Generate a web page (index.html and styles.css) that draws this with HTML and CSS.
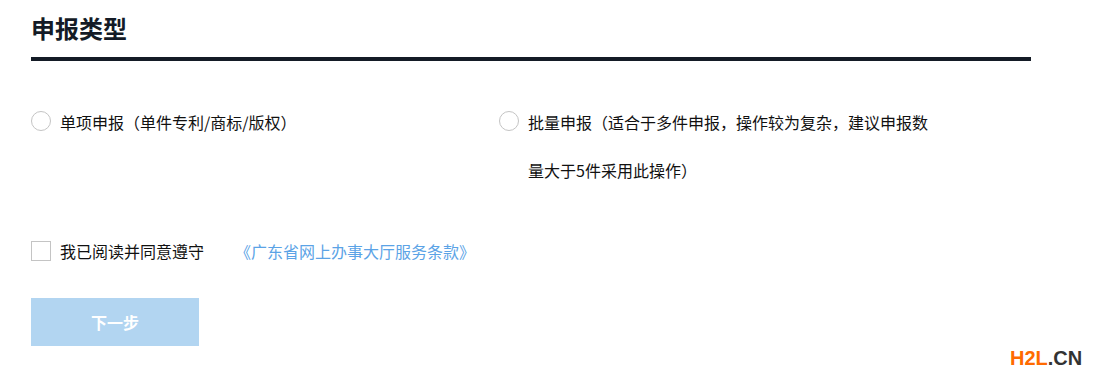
FILE: index.html
```html
<!DOCTYPE html>
<html lang="zh-CN">
<head>
<meta charset="utf-8">
<title>申报类型</title>
<link rel="stylesheet" href="styles.css">
</head>
<body>
<div class="page">
  <h1 class="title">申报类型</h1>
  <div class="options">
    <label class="option option-single">
      <span class="radio"></span>
      <span class="opt-text">单项申报（单件专利/商标/版权）</span>
    </label>
    <label class="option option-batch">
      <span class="radio"></span>
      <span class="opt-text opt-wrap">批量申报（适合于多件申报，操作较为复杂，建议申报数量大于5件采用此操作）</span>
    </label>
  </div>
  <div class="agree">
    <span class="checkbox"></span>
    <span class="agree-text">我已阅读并同意遵守</span>
    <a class="agree-link" href="#">《广东省网上办事大厅服务条款》</a>
  </div>
  <button class="next" type="button">下一步</button>
</div>
<div class="watermark"><span class="wm-a">H2L</span><span class="wm-b">.CN</span></div>
</body>
</html>
```
FILE: styles.css
```css
html, body {
  margin: 0;
  padding: 0;
  background: #ffffff;
}
body {
  font-family: "Noto Sans CJK SC", "Microsoft YaHei", sans-serif;
  color: #111111;
  width: 1096px;
  height: 381px;
  overflow: hidden;
  position: relative;
}
.page {
  padding-left: 31px;
  width: 1000px;
}
.title {
  margin: 0;
  padding: 10px 0 11px 0;
  font-size: 24px;
  line-height: 36px;
  font-weight: 700;
  color: #141b26;
  border-bottom: 4px solid #141b26;
}
.options {
  display: flex;
  margin-top: 37px;
}
.option {
  display: flex;
  align-items: flex-start;
  font-size: 16px;
  line-height: 48px;
  color: #111111;
}
.option-single {
  width: 468px;
}
.radio {
  flex: none;
  width: 18px;
  height: 18px;
  border: 1px solid #c4c4c4;
  border-radius: 50%;
  margin-top: 13px;
  margin-right: 9px;
  background: #fff;
}
.opt-wrap {
  width: 408px;
}
.agree {
  display: flex;
  align-items: center;
  margin-top: 33px;
  height: 48px;
  font-size: 16px;
}
.checkbox {
  width: 18px;
  height: 18px;
  border: 1px solid #c4c4c4;
  margin-right: 9px;
  background: #fff;
}
.agree-text {
  color: #111111;
}
.agree-link {
  margin-left: 31px;
  color: #5ba3e6;
  text-decoration: none;
}
.next {
  display: block;
  margin-top: 23px;
  width: 168px;
  height: 48px;
  border: none;
  background: #b2d5f1;
  color: #ffffff;
  font-family: "Noto Sans CJK SC", sans-serif;
  font-size: 16px;
  font-weight: 700;
  padding: 0;
}
.watermark {
  position: absolute;
  left: 1010px;
  top: 344px;
  font-family: "Liberation Sans", Arial, sans-serif;
  font-weight: 700;
  font-size: 20px;
  line-height: 28px;
}
.wm-a { color: #ff6a00; }
.wm-b { color: #333333; }
```
